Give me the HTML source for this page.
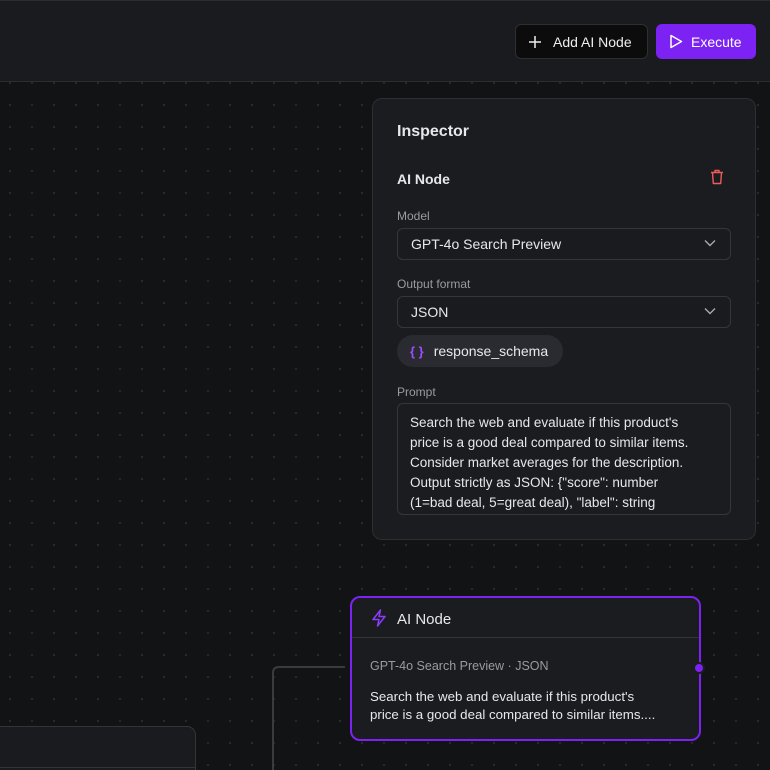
<!DOCTYPE html>
<html><head><style>
*{box-sizing:border-box;margin:0;padding:0}
html,body{width:770px;height:770px;overflow:hidden}
body{background:#121314;font-family:"Liberation Sans",sans-serif;color:#e8e8ea;position:relative}
.canvas{position:absolute;left:0;top:82px;width:770px;height:688px;background-color:#121314;background-image:radial-gradient(circle,#2a2b2e 1px,transparent 1.2px);background-size:22px 22px;background-position:-1px -10px}
.top{position:absolute;left:0;top:0;width:770px;height:82px;background:#1a1b1f;border-bottom:1px solid #2c2d31;border-top:1px solid #2c2d31}
.btn{position:absolute;top:24px;height:35px;border-radius:6px;font-size:14px;display:flex;align-items:center}
.add{left:515px;width:133px;background:#0c0c0d;border:1px solid #2e2f33;color:#eee}
.exe{left:656px;width:100px;background:#7c22f2;color:#fff}
.panel{position:absolute;left:372px;top:98px;width:384px;height:442px;background:#1b1c20;border:1px solid #2e2f33;border-radius:10px}
.lbl{position:absolute;left:24px;font-size:12px;color:#9a9ba0}
.sel{position:absolute;left:24px;width:334px;height:32px;border:1px solid #35363b;border-radius:6px;font-size:14px;padding:0 13px;display:flex;align-items:center;background:#1a1b1f}
.chev{position:absolute;right:14px;top:10px}
.node{position:absolute;left:350px;top:596px;width:351px;height:145px;background:#1b1c20;border:2px solid #7c22f2;border-radius:10px}
</style></head><body>
<div class="top"></div>
<div class="btn add"><svg style="margin:0 12px 0 13px" width="12" height="12" viewBox="0 0 12 12"><path d="M6 0v12M0 6h12" stroke="#eee" stroke-width="1.5"/></svg>Add AI Node</div>
<div class="btn exe"><svg style="margin:0 8px 0 13px" width="14" height="15" viewBox="0 0 14 15"><path d="M2 1.5L12.5 7.5L2 13.5Z" fill="none" stroke="#fff" stroke-width="1.5" stroke-linejoin="round"/></svg>Execute</div>
<div class="canvas"></div>
<svg style="position:absolute;left:0;top:0" width="770" height="770">
<path d="M345 667H279Q273 667 273 673V770" fill="none" stroke="#3a3b3f" stroke-width="2"/>
</svg>
<div style="position:absolute;left:-10px;top:726px;width:206px;height:44px;background:#1a1b1f;border:1.5px solid #333438;border-bottom:none;border-radius:9px 9px 0 0"></div>
<div style="position:absolute;left:0;top:767px;width:195px;border-top:1px solid #333438"></div>
<div class="panel">
<div style="position:absolute;left:24px;top:24px;font-size:16px;font-weight:bold">Inspector</div>
<div style="position:absolute;left:24px;top:72px;font-size:14px;font-weight:bold">AI Node</div>
<svg style="position:absolute;left:337px;top:70px" width="14" height="16" viewBox="0 0 14 16"><path d="M1 3.5h12M5 3.5V1.5h4v2M2.5 3.5l.8 11h7.4l.8-11" fill="none" stroke="#ef5a5a" stroke-width="1.4" stroke-linejoin="round"/></svg>
<div class="lbl" style="top:110px">Model</div>
<div class="sel" style="top:129px">GPT-4o Search Preview<svg class="chev" width="12" height="8" viewBox="0 0 12 8"><path d="M1 1.5l5 5 5-5" fill="none" stroke="#aaa" stroke-width="1.4"/></svg></div>
<div class="lbl" style="top:178px">Output format</div>
<div class="sel" style="top:197px">JSON<svg class="chev" width="12" height="8" viewBox="0 0 12 8"><path d="M1 1.5l5 5 5-5" fill="none" stroke="#aaa" stroke-width="1.4"/></svg></div>
<div style="position:absolute;left:24px;top:236px;width:166px;height:32px;border-radius:16px;background:#2a2b30;font-size:14px;display:flex;align-items:center;padding-left:13px"><span style="color:#9b4dff;margin-right:10px;font-size:13px;font-weight:bold">{ }</span>response_schema</div>
<div class="lbl" style="top:286px">Prompt</div>
<div style="position:absolute;left:24px;top:304px;width:334px;height:112px;border:1px solid #35363b;border-radius:6px;padding:9px 12px;font-size:13.5px;line-height:20px;overflow:hidden;color:#e8e8ea;white-space:nowrap">Search the web and evaluate if this product's<br>price is a good deal compared to similar items.<br>Consider market averages for the description.<br>Output strictly as JSON: {"score": number<br>(1=bad deal, 5=great deal), "label": string</div>
</div>
<div class="node">
<svg style="position:absolute;left:19px;top:11px" width="16" height="18" viewBox="0 0 16 18"><path d="M9.5 1L2 10.5h6L6.5 17 14 7.5H8Z" fill="none" stroke="#8b3dff" stroke-width="1.5" stroke-linejoin="round"/></svg>
<div style="position:absolute;left:45px;top:13px;font-size:15px">AI Node</div>
<div style="position:absolute;left:0;top:39px;width:347px;border-top:1px solid #34353a"></div>
<div style="position:absolute;left:18px;top:61px;font-size:12.5px;color:#9a9ba0">GPT-4o Search Preview · JSON</div>
<div style="position:absolute;left:18px;top:90px;width:315px;font-size:13.3px;line-height:18px;white-space:nowrap">Search the web and evaluate if this product's<br>price is a good deal compared to similar items....</div>
<div style="position:absolute;left:341px;top:64px;width:12px;height:12px;border-radius:50%;background:#7c22f2;border:2px solid #1b1c20"></div>
</div>
</body></html>
